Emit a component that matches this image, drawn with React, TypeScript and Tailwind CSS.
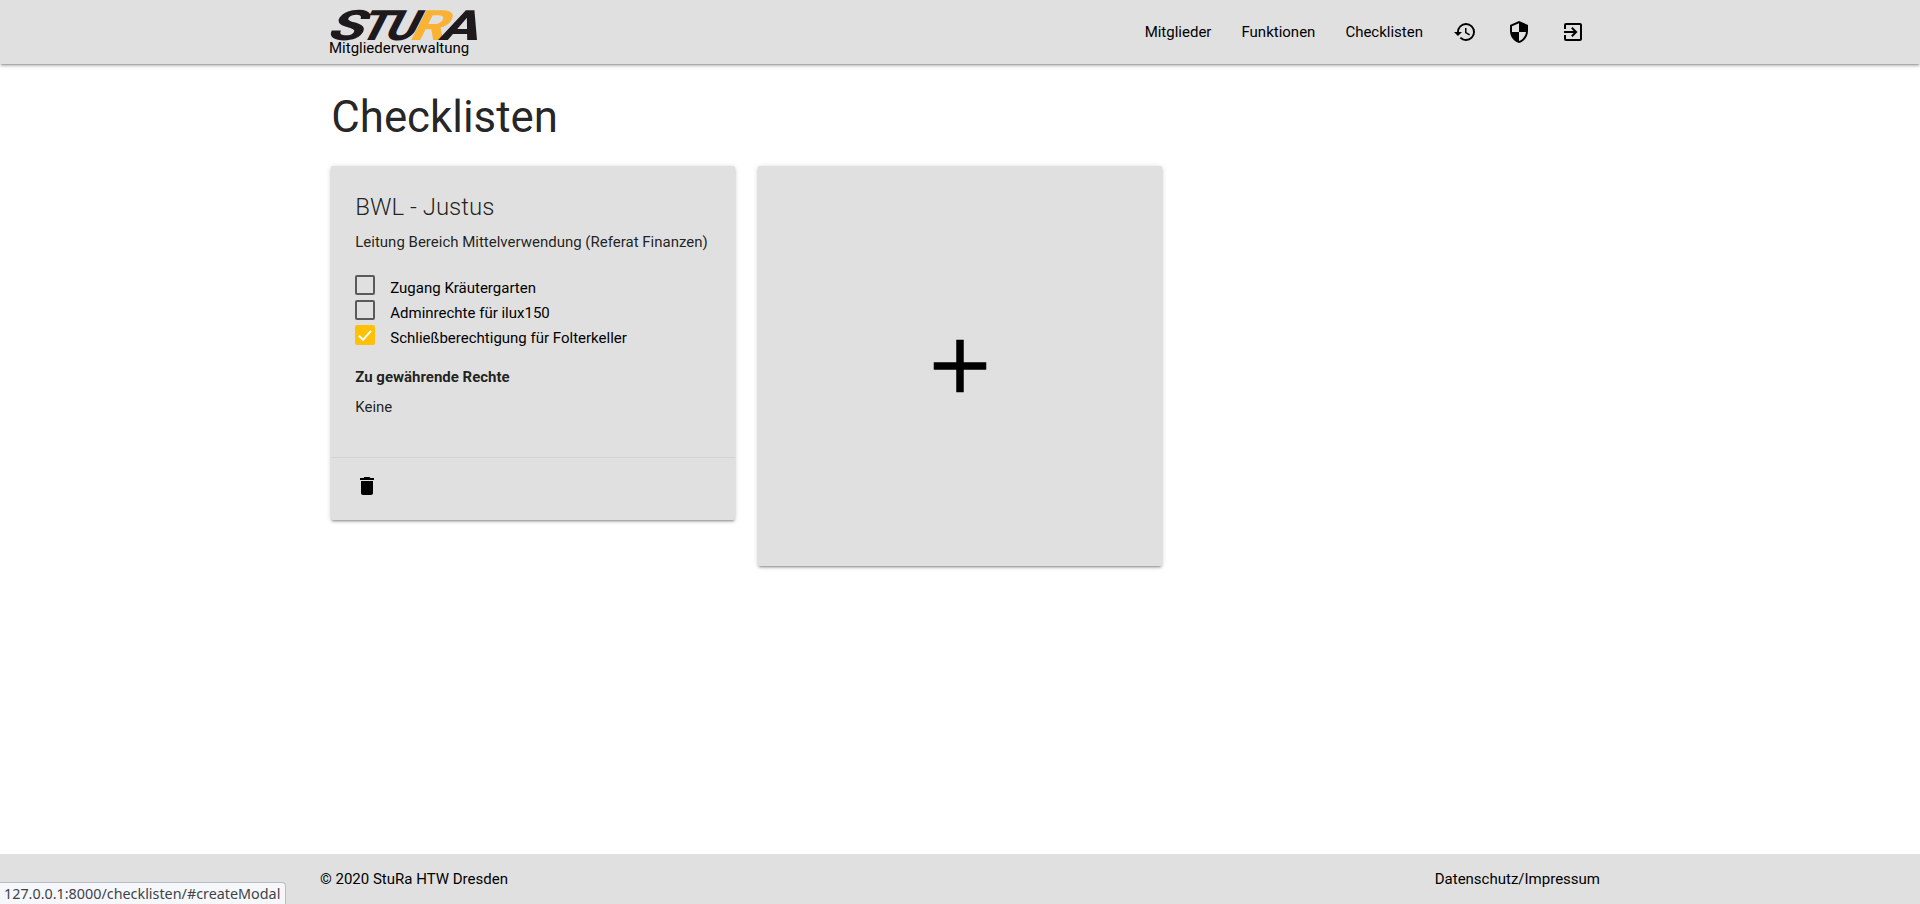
import { MdAdd, MdDelete, MdExitToApp, MdHistory, MdSecurity } from "react-icons/md";

const elevation =
  "shadow-[0_2px_2px_0_rgba(0,0,0,0.14),0_3px_1px_-2px_rgba(0,0,0,0.12),0_1px_5px_0_rgba(0,0,0,0.2)]";

const links = ["Mitglieder", "Funktionen", "Checklisten"];

const tasks = [
  { label: "Zugang Kräutergarten", done: false },
  { label: "Adminrechte für ilux150", done: false },
  { label: "Schließberechtigung für Folterkeller", done: true },
];

const logoLetters = [
  { char: "S", x: -4, width: 36, skew: -27, fill: "#1d191c" },
  { char: "T", x: 27, width: 30, skew: -27, fill: "#1d191c" },
  { char: "U", x: 53, width: 31, skew: -27, fill: "#1d191c" },
  { char: "R", x: 79, width: 36, skew: -27, fill: "#f9b233" },
  { char: "A", x: 109, width: 39, skew: -23, fill: "#1d191c" },
];

function Logo() {
  return (
    <svg width="150" height="32" viewBox="0 0 150 32" className="block overflow-visible">
      {logoLetters.map(({ char, x, width, skew, fill }) => (
        <text
          key={char}
          transform={`translate(${x} 30.5) skewX(${skew})`}
          textLength={width}
          lengthAdjust="spacingAndGlyphs"
          fill={fill}
          className="font-['Roboto'] text-[42px] font-extrabold"
        >
          {char}
        </text>
      ))}
    </svg>
  );
}

function Header() {
  return (
    <header className={`relative h-16 bg-[#e0e0e0] ${elevation}`}>
      <div className="mx-auto flex h-full w-[1280px] justify-between">
        <a className="flex flex-col pt-[9px] pl-[9px]">
          <Logo />
          <span className="relative -mt-1 leading-[22px]">Mitgliederverwaltung</span>
        </a>
        <nav className="flex items-center">
          {links.map((link) => (
            <a key={link} className="px-[15px]">
              {link}
            </a>
          ))}
          <a className="px-[15px]"><MdHistory size={24} /></a>
          <a className="px-[15px]"><MdSecurity size={24} /></a>
          <a className="px-[15px]"><MdExitToApp size={24} /></a>
        </nav>
      </div>
    </header>
  );
}

function Checkbox({ done }: { done: boolean }) {
  if (!done) {
    return <span className="size-5 rounded-[2px] border-2 border-[#5a5a5a]" />;
  }
  return (
    <span className="size-5 rounded-[2px] bg-[#ffc107]">
      <svg viewBox="0 0 20 20" className="size-5" fill="none" stroke="white" strokeWidth="2">
        <path d="M3.8 10.6 8 14.8 16 5.8" />
      </svg>
    </span>
  );
}

function ChecklistCard() {
  return (
    <article className={`rounded-[2px] bg-[#e0e0e0] ${elevation}`}>
      <div className="h-[291px] px-6 pt-[25px] text-black/87">
        <h2 className="mb-2 text-2xl leading-8 font-light">BWL - Justus</h2>
        <p>Leitung Bereich Mittelverwendung (Referat Finanzen)</p>
        <ul className="mt-[21.5px] text-black">
          {tasks.map((task) => (
            <li key={task.label} className="flex h-[25px] gap-[15px] leading-[27px]">
              <Checkbox done={task.done} />
              <span>{task.label}</span>
            </li>
          ))}
        </ul>
        <p className="mt-4 font-bold">Zu gewährende Rechte</p>
        <p className="mt-[7.5px]">Keine</p>
      </div>
      <div className="h-[63px] border-t border-[#a0a0a0]/20 px-6 py-4">
        <MdDelete size={24} />
      </div>
    </article>
  );
}

export default function App() {
  return (
    <div className="flex h-screen flex-col overflow-hidden bg-white font-['Roboto',sans-serif] text-[15px] leading-[22.5px] text-black">
      <Header />
      <main className="mx-auto w-[1280px] grow">
        <h1 className="mt-[29px] mb-[25px] px-[11.25px] text-[43.8px] leading-[48px] text-black/87">
          Checklisten
        </h1>
        <div className="grid grid-cols-3 items-start">
          <div className="px-[11.25px]">
            <ChecklistCard />
          </div>
          <div className="px-[11.25px]">
            <a className={`flex h-[400px] items-center justify-center rounded-[2px] bg-[#e0e0e0] ${elevation}`}>
              <MdAdd size={90} />
            </a>
          </div>
        </div>
      </main>
      <footer className="h-[50px] bg-[#e0e0e0]">
        <div className="mx-auto flex h-full w-[1280px] items-center justify-between">
          <span>© 2020 StuRa HTW Dresden</span>
          <a>Datenschutz/Impressum</a>
        </div>
      </footer>
      <div className="absolute bottom-0 left-0 flex h-[22px] w-[286px] items-center rounded-tr-[4px] border-t border-r border-[#b9bcc5] bg-[#f5f7fa] pt-px pl-1 font-['Noto_Sans',sans-serif] text-[14.35px] whitespace-nowrap text-[#3f4348]">
        127.0.0.1:8000/checklisten/#createModal
      </div>
    </div>
  );
}
